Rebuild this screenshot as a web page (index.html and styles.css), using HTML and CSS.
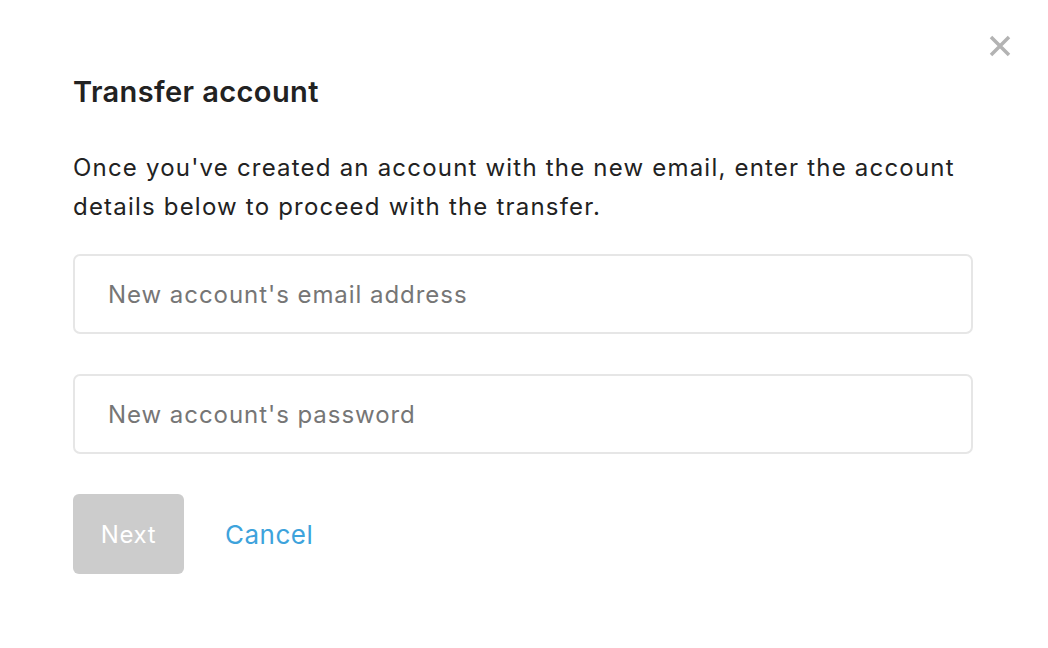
FILE: index.html
```html
<!DOCTYPE html>
<html>
<head>
<meta charset="utf-8">
<link rel="stylesheet" href="styles.css">
</head>
<body>
<div class="modal">
  <button class="close" aria-label="Close">
    <svg width="22" height="22" viewBox="0 0 22 22"><path d="M2 2 L20 20 M20 2 L2 20" stroke="#b3b3b3" stroke-width="3.5" stroke-linecap="butt"/></svg>
  </button>
  <h1 class="title">Transfer account</h1>
  <p class="desc">Once you've created an account with the new email, enter the account details below to proceed with the transfer.</p>
  <form class="form">
    <input class="field" type="email" placeholder="New account's email address">
    <input class="field" type="password" placeholder="New account's password">
    <div class="actions">
      <button type="button" class="next" disabled>Next</button>
      <a class="cancel" href="#">Cancel</a>
    </div>
  </form>
</div>
</body>
</html>
```
FILE: styles.css
```css
* { box-sizing: border-box; }
html, body { margin: 0; background: #fff; }
body { font-family: Inter, "Noto Sans", sans-serif; color: #222; }
.modal { position: relative; width: 1048px; height: 648px; padding: 74px 75px 0 73px; }
.close { position: absolute; top: 35px; right: 37px; background: none; border: 0; padding: 0; width: 22px; height: 22px; cursor: pointer; }
.close svg { display: block; }
.title { margin: 0; font-size: 29px; line-height: 36px; font-weight: 600; color: #222; letter-spacing: 0.4px; }
.desc { margin: 38px 0 0; font-size: 24px; line-height: 39px; color: #222; letter-spacing: 1.2px; }
.form { margin-top: 28px; display: flex; flex-direction: column; gap: 40px; }
.field { width: 900px; height: 80px; border: 2px solid #e6e6e6; border-radius: 7px; padding: 0 33px; font-family: inherit; font-size: 24px; letter-spacing: 0.95px; color: #222; outline: none; }
.field::placeholder { color: #767676; }
.actions { display: flex; align-items: center; gap: 41px; }
.next { width: 111px; height: 80px; border: 0; border-radius: 6px; background: #cccccc; color: #fff; font-family: inherit; font-size: 24px; letter-spacing: 0.6px; padding: 0; }
.cancel { color: #3ea3dc; text-decoration: none; font-size: 26px; letter-spacing: 0.5px; }
```
